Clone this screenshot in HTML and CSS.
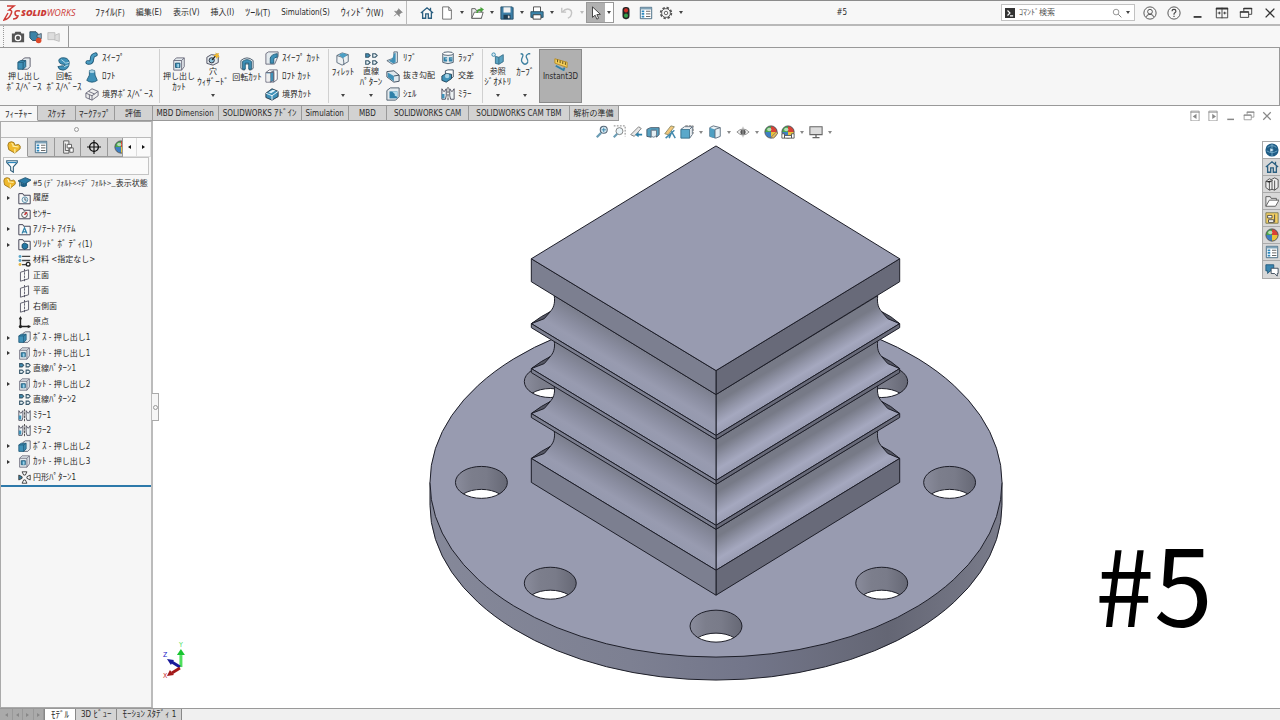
FILE: index.html
```html
<!DOCTYPE html>
<html lang="ja">
<head>
<meta charset="utf-8">
<title>#5 - SOLIDWORKS</title>
<link rel="stylesheet" href="styles.css">
</head>
<body>
<svg class="sprite" aria-hidden="true">
<defs>
<symbol id="home" viewBox="0 0 16 16"><path d="M1 8 8 2l7 6M3 7v7h3.500V9h3v5H13V7M12 5V2" fill="none" stroke="#2b5f80" stroke-width="1.500"/></symbol>
<symbol id="doc" viewBox="0 0 16 16"><path d="M3 1h7l3 3.500V15H3zM10 1v4h3" fill="#fff" stroke="#666"/></symbol>
<symbol id="open" viewBox="0 0 16 16"><path d="M2 14V3h4l1 2h6v9z" fill="#eee" stroke="#555"/><path d="m2 14 3-7h10l-2 7z" fill="#fff" stroke="#555"/><path d="M7 8q1-5 5-5V1l4 3-4 3V5Q9 5 9 8z" fill="#49a33c"/></symbol>
<symbol id="save" viewBox="0 0 16 16"><path d="M1 1h13l1 1v13H1z" fill="#3c7ea6" stroke="#234b66"/><path d="M4 1.500h8v6H4z" fill="#f2f2f2"/><path d="M4 10h8v5H4z" fill="#1e3d52"/><path d="M9 11h2v3H9z" fill="#ddd"/></symbol>
<symbol id="print" viewBox="0 0 16 16"><path d="M4 7V1h8v6" fill="#fff" stroke="#444"/><path d="M1 6.500h14V13H1z" fill="#3b86ad" stroke="#25495e"/><path d="M3.500 10h9v5h-9z" fill="#fff" stroke="#333"/></symbol>
<symbol id="undo" viewBox="0 0 16 16"><path d="M2 2v5h5M2.500 7Q7 2 11 4t1 8l-3 2" fill="none" stroke="#c4c4c4" stroke-width="1.600"/></symbol>
<symbol id="cursor" viewBox="0 0 16 16"><path d="M4 1v12l3-2.500L9 15l2-1-2-4.200 4-.3z" fill="#fff" stroke="#333"/></symbol>
<symbol id="light" viewBox="0 0 16 16"><rect x="4" y="1" width="8" height="14" rx="3.500" fill="#252525"/><circle cx="8" cy="5" r="2.300" fill="#d22f27"/><circle cx="8" cy="11" r="2.300" fill="#37a14b"/></symbol>
<symbol id="list" viewBox="0 0 16 16"><path d="M1.500 1.500h13v13h-13z" fill="#fff" stroke="#39607a"/><path d="M2 2h12v2H2z" fill="#7fa3b8"/><path d="M3 6h3M3 9h3M3 12h3" stroke="#2e88bd" stroke-width="2"/><path d="M8 6h5M8 9h5M8 12h5" stroke="#555"/></symbol>
<symbol id="gear" viewBox="0 0 16 16"><circle cx="8" cy="8" r="6" fill="none" stroke="#555" stroke-width="2.200" stroke-dasharray="2.700 2"/><circle cx="8" cy="8" r="5" fill="#f7f7f7" stroke="#555"/><circle cx="8" cy="8" r="2" fill="none" stroke="#555"/></symbol>
<symbol id="glass" viewBox="0 0 16 16"><circle cx="6.500" cy="6.500" r="4.500" fill="none" stroke="#777" stroke-width="1.200"/><path d="m10 10 5 5" stroke="#777" stroke-width="1.500"/></symbol>
<symbol id="term" viewBox="0 0 16 16"><path d="M0 0h16v16H0z" fill="#333"/><path d="m4 4 4 4-4 4M8 12.500h5" fill="none" stroke="#fff" stroke-width="1.800"/></symbol>
<symbol id="user" viewBox="0 0 16 16"><circle cx="8" cy="8" r="7" fill="none" stroke="#444"/><circle cx="8" cy="6.500" r="2.700" fill="none" stroke="#444"/><path d="M4 12.500q0-3 4-3t4 3" fill="none" stroke="#444"/></symbol>
<symbol id="help" viewBox="0 0 16 16"><circle cx="8" cy="8" r="7" fill="none" stroke="#444"/><path d="M5.800 6q0-2.200 2.200-2.200T10.200 6q0 1-1.200 1.800T8 10M8 11.200v1.500" fill="none" stroke="#444" stroke-width="1.300"/></symbol>
<symbol id="min" viewBox="0 0 16 16"><path d="M3 12.500h9" stroke="currentColor" stroke-width="2"/></symbol>
<symbol id="tile" viewBox="0 0 16 16"><path d="M1.500 2.500h13v11h-13zM8 2v12M3 8h3.500M13 8H9.500M5 6.500v3M11 6.500v3" fill="none" stroke="currentColor"/><path d="M1 3h14" stroke="currentColor" stroke-width="2"/></symbol>
<symbol id="restore" viewBox="0 0 16 16"><path d="M5.500 6V2.500h9v7H11M1.500 6.500H11V13H1.500z" fill="none" stroke="currentColor"/><path d="M5 3h10M1 7h10" stroke="currentColor" stroke-width="1.500"/></symbol>
<symbol id="close" viewBox="0 0 16 16"><path d="m3 3 10 10M13 3 3 13" stroke="currentColor" stroke-width="1.600"/></symbol>
<symbol id="winl" viewBox="0 0 16 16"><path d="M2.500 1.500h11v13h-11zM2 3h12" fill="none" stroke="currentColor"/><path d="M10 5v7L5 8.500z" fill="currentColor"/></symbol>
<symbol id="winr" viewBox="0 0 16 16"><path d="M2.500 1.500h11v13h-11zM2 3h12" fill="none" stroke="currentColor"/><path d="M7 5v7l5-3.500z" fill="currentColor"/></symbol>
<symbol id="pin" viewBox="0 0 16 16"><path d="m9 1 6 6-2 .5-3 3 .5 3L6 9l-4 4 4-4-3.500-4 3 .5 3-3z" fill="#888" stroke="#888"/></symbol>
<symbol id="cam" viewBox="0 0 16 16"><path d="M1 4h3l1-2h6l1 2h3v10H1z" fill="#555"/><circle cx="8" cy="9" r="3.800" fill="#fff"/><circle cx="8" cy="9" r="2.400" fill="#555"/></symbol>
<symbol id="rec" viewBox="0 0 16 16"><path d="M1 2h7l2 2v8H4L1 9z" fill="#3b84a8" stroke="#29485a"/><path d="m9 6 5-2v6L9 8z" fill="#8fb9cf" stroke="#456"/><circle cx="11" cy="12" r="3.200" fill="#dd4a2b"/></symbol>
<symbol id="recg" viewBox="0 0 16 16"><path d="M1 3h8v8H1zM9 6l5-2v9l-6-2" fill="#ddd" stroke="#bbb"/></symbol>
<symbol id="extrude" viewBox="0 0 16 16"><path d="m6 3 3-2h6v10l-3 3H6z" fill="#e4eaee" stroke="#556"/><path d="m1 6 3-2h6v7l-3 3H1z" fill="#3f91b8" stroke="#1f5876"/><path d="M1 6h6v8M7 6l3-2" fill="none" stroke="#1f5876"/></symbol>
<symbol id="revolve" viewBox="0 0 16 16"><path d="M5 1q8-1 9 5 0 8-7 9-5 0-6-4l5-1q3 1 3-1-2-1-4-1-3-1-3-4 0-2 3-3z" fill="#3f91b8" stroke="#1f5876"/><path d="m5 3 5 4 4-1M8 11l5-2" fill="none" stroke="#bfe0ee"/></symbol>
<symbol id="sweep" viewBox="0 0 16 16"><path d="M3 13q5 1 5-4 0-4 4-5" fill="none" stroke="#1f5876" stroke-width="5" stroke-linecap="round"/><path d="M3 13q5 1 5-4 0-4 4-5" fill="none" stroke="#4a9cc2" stroke-width="3" stroke-linecap="round"/></symbol>
<symbol id="loft" viewBox="0 0 16 16"><path d="M5 2q3-2 6 0l.5 5 2.500 6q-6 4-12 0l3-6z" fill="#3f91b8" stroke="#1f5876"/><ellipse cx="8" cy="3" rx="3" ry="1.500" fill="#a8d3e5"/></symbol>
<symbol id="boundary" viewBox="0 0 16 16"><path d="m1 7 7-5 7 3v5l-7 5-7-3z" fill="#eee" stroke="#667"/><path d="m1 7 7 3 7-5M8 10v5M4 5l7 3M5 9v5" fill="none" stroke="#667"/></symbol>
<symbol id="cut" viewBox="0 0 16 16"><path d="m2 4 3-3h9v10l-3 4H2z" fill="#e4eaee" stroke="#667"/><path d="M2 4h9v11M11 4l3-3" fill="none" stroke="#667"/><path d="M4 7h5v5H4z" fill="#3f91b8" stroke="#1f5876"/><path d="M6 8h2v4H6z" fill="#9ed0e6"/></symbol>
<symbol id="hole" viewBox="0 0 16 16"><path d="m1 6 5-3 8 1v8l-6 3-7-2z" fill="#e4eaee" stroke="#445"/><circle cx="6.500" cy="9.500" r="3" fill="#8cc1d8" stroke="#223"/><path d="m7 9 6-7" stroke="#222" stroke-width="1.500"/><path d="m11 0 1 2 3-1-1 3 2 2h-3l-1 2-1-3-3-1 3-1z" fill="#f1b92e"/></symbol>
<symbol id="revcut" viewBox="0 0 16 16"><path d="M1 4q7-6 14 0v9q-2 2-4 2V8H5v7q-2 0-4-2z" fill="#e7edf0" stroke="#456"/><path d="M3 5q5-4 10 0v9h-3V7H6v7H3z" fill="#3f91b8" stroke="#1f5876"/></symbol>
<symbol id="sweepcut" viewBox="0 0 16 16"><path d="m1 3 3-2h11v5l-4 9H1z" fill="#e4eaee" stroke="#667"/><path d="M6 14V8q1-4 8-5v4q-3 0-4 2v5z" fill="#3f91b8" stroke="#1f5876"/></symbol>
<symbol id="loftcut" viewBox="0 0 16 16"><path d="m1 4 4-3h9v11l-4 3H1z" fill="#fff" stroke="#667"/><path d="m6 4 4-2v11l-4 2zM1 4h9v11" fill="#3f91b8" stroke="#667"/><path d="M2 5h4v9H2z" fill="#eee"/></symbol>
<symbol id="boundcut" viewBox="0 0 16 16"><path d="m1 7 7-5 7 3v6l-7 4-7-3z" fill="#3f91b8" stroke="#234"/><path d="m1 7 7 3 7-5M8 10v5" fill="none" stroke="#fff"/><path d="m4 6 5-3 3 1-5 3z" fill="#dff1fa"/></symbol>
<symbol id="fillet" viewBox="0 0 16 16"><path d="m1 4 6-3 7 2v8l-7 4-6-3z" fill="#edf1f3" stroke="#567"/><path d="m1 4 6 2q2 1 2 9M7 6l7-3" fill="none" stroke="#567"/><path d="m3 3 5-2 5 2-5 4z" fill="#4ca0c6"/></symbol>
<symbol id="pattern" viewBox="0 0 16 16"><g fill="#e9f3f7" stroke="#39586b" stroke-width="1.300"><path d="M2 2h3l2 2-2 2H2z" fill="#3f91b8"/><path d="M10 2h3l2 2-2 2h-3zM2 10h3l2 2-2 2H2zM10 10h3l2 2-2 2h-3z"/></g></symbol>
<symbol id="rib" viewBox="0 0 16 16"><path d="M1 11 9 8V1h4v12l-6 2z" fill="#e4eaee" stroke="#567"/><path d="M3 11q5-1 6-8l2-1v11l-3 1z" fill="#3f91b8"/></symbol>
<symbol id="draft" viewBox="0 0 16 16"><path d="m1 3 8-1 6 5v7l-6 1-8-6z" fill="#dfe8ed" stroke="#345"/><path d="m2 4 7 4v6L2 9z" fill="#3f91b8"/><path d="m9 8 6-1" stroke="#345"/></symbol>
<symbol id="shell" viewBox="0 0 16 16"><path d="m1 4 4-3h10v10l-4 4H1z" fill="#e4eaee" stroke="#456"/><path d="M4 5h9v8H4z" fill="#2e80a8"/><path d="M7 5h6v6l-3-1V8z" fill="#b6dbe9"/></symbol>
<symbol id="wrap" viewBox="0 0 16 16"><path d="M2 3v10q6 3 12 0V3" fill="#e2eaee" stroke="#456"/><ellipse cx="8" cy="3" rx="6" ry="2" fill="#fff" stroke="#456"/><path d="M3 7h4v5H3zM9 7h4v5H9z" fill="#2e80a8"/><path d="M5 9h2M11 9h1" stroke="#fff"/></symbol>
<symbol id="intersect" viewBox="0 0 16 16"><path d="m5 2 3-1h6v8l-3 2H5z" fill="#fff" stroke="#345"/><path d="m1 8 5-3 6 1v5l-6 4-5-2z" fill="#3f91b8" stroke="#1f4055"/><circle cx="7" cy="8" r="2.500" fill="#a8d3e5"/></symbol>
<symbol id="mirror" viewBox="0 0 16 16"><path d="M1 2v12h4l1-4V2L4 5H3zM15 2v12h-4l-1-4V2l2 3h1z" fill="#eef3f5" stroke="#445"/><path d="M1 8h3v5H1z" fill="#3f91b8"/><path d="M8 0v16" stroke="#333" stroke-dasharray="3 1"/></symbol>
<symbol id="refgeo" viewBox="0 0 16 16"><circle cx="3" cy="3" r="2" fill="#d8ebf3" stroke="#2e80a8"/><path d="m5 5 4 1 5-3v8l-5 3-4-1z" fill="#5aa3c2" stroke="#326a86"/><path d="M9 6v8" stroke="#326a86"/></symbol>
<symbol id="curve" viewBox="0 0 16 16"><path d="M3 2q4 0 2 4t0 6q3 4 6 0 1-2-1-5t2-5h2" fill="none" stroke="#3c7f9f" stroke-width="1.500"/></symbol>
<symbol id="ruler" viewBox="0 0 16 16"><path d="m1 2 14 4v6L1 7z" fill="#f4cf5b" stroke="#b58a22"/><path d="M4 3v3M7 4v3M10 5v3M13 6v3" stroke="#554414"/><path d="m2 10 9 5 1-3" fill="none" stroke="#2e80a8" stroke-width="2"/></symbol>
<symbol id="part" viewBox="0 0 16 16"><path d="M1 6q0-4 4-4t4 4l4-1q3 1 2 5l-6 5-7-4z" fill="#f0b92c" stroke="#9a7319"/><path d="M5 4q2 0 2 3l6 1M9 10v5" fill="none" stroke="#fff0a8" stroke-width="1.400"/></symbol>
<symbol id="config" viewBox="0 0 16 16"><path d="M3 1h6v14H3z" fill="#eee" stroke="#555"/><path d="M7 5h5v4H7zM10 9h4v5h-4z" fill="#fff" stroke="#555"/><path d="M5 4v8M5 12h4" stroke="#555"/></symbol>
<symbol id="target" viewBox="0 0 16 16"><circle cx="8" cy="8" r="5" fill="none" stroke="#111" stroke-width="1.600"/><path d="M8 0v16M0 8h16" stroke="#111" stroke-width="1.300"/></symbol>
<symbol id="ball" viewBox="0 0 16 16"><circle cx="8" cy="8" r="7" fill="#3d7fc4"/><path d="M8 8V1a7 7 0 0 0-7 7z" fill="#49a84c"/><path d="M8 8V1a7 7 0 0 1 7 7z" fill="#d94235"/><path d="M8 8v7a7 7 0 0 0 7-7z" fill="#e8c33a"/><circle cx="8" cy="8" r="7" fill="none" stroke="#555"/><ellipse cx="6" cy="5" rx="2.500" ry="2" fill="#fff" opacity=".6"/></symbol>
<symbol id="filter" viewBox="0 0 16 16"><path d="M2 2h12v2l-4.500 5v6l-3-2V9L2 4z" fill="#fff" stroke="#2f5f7c" stroke-width="1.300"/><path d="M3 4h10" stroke="#2e88bd" stroke-width="1.500"/></symbol>
<symbol id="cap" viewBox="0 0 16 16"><path d="m0 6 9-4 7 3-8 5z" fill="#2b7ba6" stroke="#174a68"/><path d="M3 8v4q4 3 8 0V8L8 10z" fill="#1f5f83"/><path d="M2 7v6" stroke="#174a68"/></symbol>
<symbol id="folder" viewBox="0 0 16 16"><path d="M1 14.500V2h5l1 2h8v10.500z" fill="#f8f8f8" stroke="#445" stroke-width="1.200"/></symbol>
<symbol id="hist" viewBox="0 0 16 16"><use href="#folder"/><circle cx="8.500" cy="9.500" r="3.500" fill="#e5f2f8" stroke="#47809d"/><path d="M8.500 7v3h2" fill="none" stroke="#345"/></symbol>
<symbol id="sensor" viewBox="0 0 16 16"><use href="#folder"/><circle cx="8" cy="9.500" r="3.500" fill="none" stroke="#333"/><path d="m8 9.500 3-3" stroke="#c33" stroke-width="2"/></symbol>
<symbol id="annot" viewBox="0 0 16 16"><use href="#folder"/><path d="m5 13 3-7 3 7M6 11h4" fill="none" stroke="#2e80a8" stroke-width="1.500"/></symbol>
<symbol id="solid" viewBox="0 0 16 16"><use href="#folder"/><path d="m5 8 3-2 4 2v4l-4 2-3-2z" fill="#2477a3" stroke="#123d57"/></symbol>
<symbol id="mat" viewBox="0 0 16 16"><path d="M5 3h10M5 8h10M5 13h6" stroke="#444" stroke-width="1.600"/><circle cx="2.500" cy="3" r="1.800" fill="#5aa6c8"/><circle cx="2.500" cy="8" r="1.800" fill="#5aa6c8"/><circle cx="2.500" cy="13" r="1.800" fill="#e5b645"/><circle cx="12.500" cy="12.500" r="2.300" fill="#fff" stroke="#222" stroke-width="1.600"/></symbol>
<symbol id="plane" viewBox="0 0 16 16"><path d="m3 4 10-3v11L3 15z" fill="#f8f8f8" stroke="#445"/><path d="M8 0v16" stroke="#445" stroke-dasharray="3 1"/></symbol>
<symbol id="origin" viewBox="0 0 16 16"><path d="M3 2v11h12" fill="none" stroke="#222" stroke-width="1.800"/><path d="M3 0 1 4h4zM16 13l-4-2v4z" fill="#222"/><circle cx="3" cy="13" r="2" fill="#222"/></symbol>
<symbol id="circpat" viewBox="0 0 16 16"><g fill="#fff" stroke="#444" stroke-width="1.200"><path d="M5 1h6L9 5H7zM5 15h6l-2-4H7zM15 5v6l-4-2V7z"/><path d="M1 5v6l4-2V7z" fill="#2e80a8"/></g></symbol>
<symbol id="zoomfit" viewBox="0 0 16 16"><circle cx="10" cy="5.500" r="4" fill="#d9ebf4" stroke="#567" stroke-width="1.200"/><path d="m7 9-5 5" stroke="#6a9cb4" stroke-width="2.500"/><path d="M10 3v5M7.500 5.500h5" stroke="#2e80a8"/></symbol>
<symbol id="zoomarea" viewBox="0 0 16 16"><path d="M2 1h13v12" fill="none" stroke="#777" stroke-dasharray="2 1.500"/><circle cx="8.500" cy="7" r="4" fill="#eaf4f8" stroke="#777"/><path d="m6 10-4 4" stroke="#6a9cb4" stroke-width="2.500"/></symbol>
<symbol id="prev" viewBox="0 0 16 16"><path d="m2 11 9-9 3 2-8 9z" fill="#e7e7e7" stroke="#777"/><path d="m7 11 4-3v2h4v2h-4v2z" fill="#2e80a8"/></symbol>
<symbol id="section" viewBox="0 0 16 16"><path d="m1 5 4-2h10v8l-3 3V6H6v8l-5-1z" fill="#549fc0" stroke="#456"/><path d="M6 6h6v6l-3 2-3-1z" fill="#e3eef3" stroke="#678"/></symbol>
<symbol id="dyn" viewBox="0 0 16 16"><path d="m2 10 7-9 4 1-7 9z" fill="#f2c77b" stroke="#886"/><path d="M3 15 13 6M7 15l3-7 4 7" fill="none" stroke="#4289ad" stroke-width="1.700"/></symbol>
<symbol id="orient" viewBox="0 0 16 16"><path d="M6 1h9v9" fill="none" stroke="#666" stroke-dasharray="3 1"/><path d="M1 5h10v10H1z" fill="#5aa8ca" stroke="#326a86"/><path d="m1 5 4-3h9v9l-3 4M11 5l3-3" fill="none" stroke="#567"/></symbol>
<symbol id="style" viewBox="0 0 16 16"><path d="m2 3 4-2 8 2v10l-5 2-7-2z" fill="#e8f1f5" stroke="#567"/><path d="m2 3 6 2v10l-6-2z" fill="#4e9fc2"/><path d="m8 5 6-2M8 5v10" stroke="#567"/></symbol>
<symbol id="eye" viewBox="0 0 16 16"><path d="M1 8q7-7 14 0-7 7-14 0z" fill="#eee" stroke="#888"/><circle cx="8" cy="8" r="3" fill="#555"/><path d="M8 2v12" stroke="#aaa"/></symbol>
<symbol id="appear" viewBox="0 0 16 16"><use href="#ball"/><path d="m8 14 6-6 2 1-5 6z" fill="#e9c35c" stroke="#876"/></symbol>
<symbol id="scene" viewBox="0 0 16 16"><use href="#ball"/><path d="M1 10h3v5H1zM12 10h3v5h-3zM4 12h8v3H4z" fill="#fff" stroke="#555"/></symbol>
<symbol id="monitor" viewBox="0 0 16 16"><path d="M1 2h14v9H1z" fill="#ddd" stroke="#666" stroke-width="1.200"/><path d="M8 11v3M4 14.500h8" stroke="#666" stroke-width="1.500"/></symbol>
<symbol id="globe" viewBox="0 0 16 16"><circle cx="8" cy="8" r="7.500" fill="#1f5d86"/><path d="M3 5q5-4 10 0M2 9q6 4 12 0M8 1v14" fill="none" stroke="#76abc9"/><path d="m6 6 4 2-4 2z" fill="#cfe6f2"/></symbol>
<symbol id="books" viewBox="0 0 16 16"><path d="m1 5 4-3 2 1 4-2 4 2v9l-4 3-3-1-3 1-4-3z" fill="#eee" stroke="#444"/><path d="M5 5v10M8 5v9M11 4v11M1 5l4 1 4-2" stroke="#444"/></symbol>
<symbol id="fopen" viewBox="0 0 16 16"><path d="M1 14V3h5l1 2h6v3" fill="#eee" stroke="#555"/><path d="m1 14 4-7h11l-4 7z" fill="#fff" stroke="#555"/></symbol>
<symbol id="palette" viewBox="0 0 16 16"><path d="M1 2h14v12H1z" fill="#f3cf62" stroke="#775"/><path d="M3 5h5v3H3zM4 10h6v3H4zM11 4v9" fill="#fff" stroke="#444"/></symbol>
<symbol id="chat" viewBox="0 0 16 16"><path d="M1 2h9v7H6l-3 3V9H1z" fill="#3b86b0" stroke="#24597a"/><path d="M7 6h8v6h-1v3l-3-3H7z" fill="#fff" stroke="#345"/></symbol>
</defs>
</svg>

<div class="app">
<header class="titlebar">
  <svg class="logo" viewBox="0 0 18 18" role="img" aria-label="3DS"><path d="M4 2h7L6 6q4 0 2 4-2 5-7 6l4-7M17 7q-5-1-5 2t3 3q-1 3-5 3" fill="none" stroke="#cf3a35" stroke-width="1.500"/></svg>
  <span class="brand"><strong>SOLID</strong>WORKS</span>
  <nav class="menu">
    <button><span class="k">ﾌｧｲﾙ</span>(F)</button><button>編集(E)</button><button>表示(V)</button><button>挿入(I)</button><button><span class="k">ﾂｰﾙ</span>(T)</button><button>Simulation(S)</button><button><span class="k">ｳｨﾝﾄﾞｳ</span>(W)</button>
  </nav>
  <button class="pin" aria-label="Pin"><svg><use href="#pin"/></svg></button>
  <div class="qat">
    <button aria-label="Home"><svg><use href="#home"/></svg></button>
    <button aria-label="New"><svg><use href="#doc"/></svg></button><i class="dd"></i>
    <button aria-label="Open"><svg><use href="#open"/></svg></button><i class="dd"></i>
    <button aria-label="Save"><svg><use href="#save"/></svg></button><i class="dd"></i>
    <button aria-label="Print"><svg><use href="#print"/></svg></button><i class="dd"></i>
    <button aria-label="Undo"><svg><use href="#undo"/></svg></button><i class="dd dim"></i>
    <span class="select"><button class="pressed" aria-label="Select"><svg><use href="#cursor"/></svg></button><i class="dd"></i></span>
    <button aria-label="Rebuild"><svg><use href="#light"/></svg></button>
    <button aria-label="Properties"><svg><use href="#list"/></svg></button>
    <button aria-label="Options"><svg><use href="#gear"/></svg></button><i class="dd"></i>
  </div>
  <h1 class="title">#5</h1>
  <label class="search"><svg><use href="#term"/></svg><input type="text" placeholder="ｺﾏﾝﾄﾞ検索" aria-label="ｺﾏﾝﾄﾞ検索"><svg><use href="#glass"/></svg><i class="dd"></i></label>
  <div class="winbtns">
    <button aria-label="Account"><svg><use href="#user"/></svg></button><button aria-label="Help"><svg><use href="#help"/></svg></button><button aria-label="Minimize"><svg><use href="#min"/></svg></button><button aria-label="Tile"><svg><use href="#tile"/></svg></button><button aria-label="Restore"><svg><use href="#restore"/></svg></button><button aria-label="Close"><svg><use href="#close"/></svg></button>
  </div>
</header>

<div class="capture">
  <div class="capture-tools">
    <button aria-label="Capture"><svg><use href="#cam"/></svg></button><button aria-label="Record"><svg><use href="#rec"/></svg></button><button aria-label="Stop" disabled><svg><use href="#recg"/></svg></button>
  </div>
</div>

<section class="ribbon">
  <div class="group g1">
    <button class="big low w40"><svg><use href="#extrude"/></svg><span>押し出し<br><span class="k">ﾎﾞｽ/ﾍﾞｰｽ</span></span></button>
    <button class="big low w40"><svg><use href="#revolve"/></svg><span>回転<br><span class="k">ﾎﾞｽ/ﾍﾞｰｽ</span></span></button>
    <div class="stack">
      <button class="k"><svg><use href="#sweep"/></svg>ｽｲｰﾌﾟ</button>
      <button class="k"><svg><use href="#loft"/></svg>ﾛﾌﾄ</button>
      <button><svg><use href="#boundary"/></svg><span>境界<span class="k">ﾎﾞｽ/ﾍﾞｰｽ</span></span></button>
    </div>
  </div>
  <div class="group g2">
    <button class="big low w34"><svg><use href="#cut"/></svg><span>押し出し<br><span class="k">ｶｯﾄ</span></span></button>
    <button class="big w34"><svg><use href="#hole"/></svg><span>穴<br><span class="k">ｳｨｻﾞｰﾄﾞ</span></span><i class="dd"></i></button>
    <button class="big low w34"><svg><use href="#revcut"/></svg><span>回転<span class="k">ｶｯﾄ</span></span></button>
    <div class="stack">
      <button class="k"><svg><use href="#sweepcut"/></svg>ｽｲｰﾌﾟ ｶｯﾄ</button>
      <button class="k"><svg><use href="#loftcut"/></svg>ﾛﾌﾄ ｶｯﾄ</button>
      <button><svg><use href="#boundcut"/></svg><span>境界<span class="k">ｶｯﾄ</span></span></button>
    </div>
  </div>
  <div class="group g3">
    <button class="big w28"><svg><use href="#fillet"/></svg><span class="k">ﾌｨﾚｯﾄ</span><i class="dd"></i></button>
    <button class="big w28"><svg><use href="#pattern"/></svg><span>直線<br><span class="k">ﾊﾟﾀｰﾝ</span></span><i class="dd"></i></button>
    <div class="stack s55">
      <button class="k"><svg><use href="#rib"/></svg>ﾘﾌﾞ</button>
      <button><svg><use href="#draft"/></svg>抜き勾配</button>
      <button class="k"><svg><use href="#shell"/></svg>ｼｪﾙ</button>
    </div>
    <div class="stack">
      <button class="k"><svg><use href="#wrap"/></svg>ﾗｯﾌﾟ</button>
      <button><svg><use href="#intersect"/></svg>交差</button>
      <button class="k"><svg><use href="#mirror"/></svg>ﾐﾗｰ</button>
    </div>
  </div>
  <div class="group g4">
    <button class="big w28"><svg><use href="#refgeo"/></svg><span>参照<br><span class="k">ｼﾞｵﾒﾄﾘ</span></span><i class="dd"></i></button>
    <button class="big w28"><svg><use href="#curve"/></svg><span class="k">ｶｰﾌﾞ</span><i class="dd"></i></button>
  </div>
  <button class="big low instant"><svg><use href="#ruler"/></svg><span>Instant3D</span></button>
</section>

<div class="tabrow">
  <div class="cmdtabs">
    <button class="k on t38">ﾌｨｰﾁｬｰ</button><button class="k t38">ｽｹｯﾁ</button><button class="k t38">ﾏｰｸｱｯﾌﾟ</button><button class="t38">評価</button><button>MBD Dimension</button><button>SOLIDWORKS <span class="k">ｱﾄﾞｲﾝ</span></button><button>Simulation</button><button class="t38">MBD</button><button class="wide">SOLIDWORKS CAM</button><button class="wide">SOLIDWORKS CAM TBM</button><button>解析の準備</button>
  </div>
  <div class="docbtns">
    <button aria-label="Previous pane"><svg><use href="#winl"/></svg></button><button aria-label="Next pane"><svg><use href="#winr"/></svg></button><button aria-label="Minimize document"><svg><use href="#min"/></svg></button><button aria-label="Restore document"><svg><use href="#restore"/></svg></button><button aria-label="Close document"><svg><use href="#close"/></svg></button>
  </div>
</div>

<main class="work">
  <aside class="panel">
    <div class="grip"><i></i></div>
    <div class="ptabs">
      <button class="on" aria-label="FeatureManager"><svg><use href="#part"/></svg></button><button aria-label="PropertyManager"><svg><use href="#list"/></svg></button><button aria-label="ConfigurationManager"><svg><use href="#config"/></svg></button><button aria-label="DimXpert"><svg><use href="#target"/></svg></button><button class="part-tab" aria-label="DisplayManager"><svg><use href="#ball"/></svg></button><button class="arr" aria-label="Left"><i class="al"></i></button><button class="arr" aria-label="Right"><i class="ar"></i></button>
    </div>
    <label class="filter"><svg><use href="#filter"/></svg><input type="text" aria-label="Filter"></label>
    <ul class="tree">
      <li class="root"><svg><use href="#part"/></svg><svg><use href="#cap"/></svg><span>#5 (ﾃﾞ ﾌｫﾙﾄ&lt;&lt;ﾃﾞ ﾌｫﾙﾄ&gt;_表示状態</span></li>
      <li class="x"><svg><use href="#hist"/></svg><span>履歴</span></li>
      <li><svg><use href="#sensor"/></svg><span class="k">ｾﾝｻｰ</span></li>
      <li class="x"><svg><use href="#annot"/></svg><span class="k">ｱﾉﾃｰﾄ ｱｲﾃﾑ</span></li>
      <li class="x"><svg><use href="#solid"/></svg><span><span class="k">ｿﾘｯﾄﾞ ﾎﾞ ﾃﾞｨ</span>(1)</span></li>
      <li><svg><use href="#mat"/></svg><span>材料 &lt;指定なし&gt;</span></li>
      <li><svg><use href="#plane"/></svg><span>正面</span></li>
      <li><svg><use href="#plane"/></svg><span>平面</span></li>
      <li><svg><use href="#plane"/></svg><span>右側面</span></li>
      <li><svg><use href="#origin"/></svg><span>原点</span></li>
      <li class="x"><svg><use href="#extrude"/></svg><span><span class="k">ﾎﾞｽ</span> - 押し出し1</span></li>
      <li class="x"><svg><use href="#cut"/></svg><span><span class="k">ｶｯﾄ</span> - 押し出し1</span></li>
      <li><svg><use href="#pattern"/></svg><span>直線<span class="k">ﾊﾟﾀｰﾝ</span>1</span></li>
      <li class="x"><svg><use href="#cut"/></svg><span><span class="k">ｶｯﾄ</span> - 押し出し2</span></li>
      <li><svg><use href="#pattern"/></svg><span>直線<span class="k">ﾊﾟﾀｰﾝ</span>2</span></li>
      <li><svg><use href="#mirror"/></svg><span><span class="k">ﾐﾗｰ</span>1</span></li>
      <li><svg><use href="#mirror"/></svg><span><span class="k">ﾐﾗｰ</span>2</span></li>
      <li class="x"><svg><use href="#extrude"/></svg><span><span class="k">ﾎﾞｽ</span> - 押し出し2</span></li>
      <li class="x"><svg><use href="#cut"/></svg><span><span class="k">ｶｯﾄ</span> - 押し出し3</span></li>
      <li><svg><use href="#circpat"/></svg><span>円形<span class="k">ﾊﾟﾀｰﾝ</span>1</span></li>
    </ul>
  </aside>
  <section class="view">
    <svg class="scene" viewBox="153 121 1127 588" preserveAspectRatio="xMidYMid meet" role="img" aria-label="3D model">
      <defs>
        <linearGradient id="rim" gradientUnits="userSpaceOnUse" x1="429" y1="0" x2="1003" y2="0"><stop offset="0" stop-color="#858899"/><stop offset=".35" stop-color="#7d8092"/><stop offset=".55" stop-color="#73768a"/><stop offset=".8" stop-color="#646674"/><stop offset="1" stop-color="#7a7c8b"/></linearGradient>
        <linearGradient id="wall"><stop offset="0" stop-color="#8a8c9c"/><stop offset=".3" stop-color="#7c7e8c"/><stop offset=".6" stop-color="#797b89"/><stop offset="1" stop-color="#666875"/></linearGradient>
        <linearGradient id="gr" gradientUnits="userSpaceOnUse" x1="716" y1="395" x2="734" y2="425"><stop offset="0" stop-color="#777a87"/><stop offset=".2" stop-color="#777a87"/><stop offset=".5" stop-color="#9194a7"/><stop offset=".75" stop-color="#a5a8bf"/><stop offset="1" stop-color="#999cb2"/></linearGradient>
        <linearGradient id="gl" gradientUnits="userSpaceOnUse" x1="716" y1="395" x2="698" y2="425"><stop offset="0" stop-color="#7c7f8e"/><stop offset=".35" stop-color="#8a8da0"/><stop offset=".7" stop-color="#989bb0"/><stop offset="1" stop-color="#9599ae"/></linearGradient>
        <clipPath id="hc"><ellipse rx="26" ry="16"/></clipPath>
        <g id="bore"><ellipse rx="26" ry="16" fill="url(#wall)"/><g clip-path="url(#hc)"><ellipse cy="23" rx="26" ry="16" fill="#fff" stroke="#1d1e28"/></g><ellipse rx="26" ry="16" fill="none" stroke="#1d1e28"/></g>
        <g id="groove">
          <path d="M716 395 878 296C876 312 885 315 900 324L716 436z" fill="url(#gr)"/>
          <path d="M716 395 554 296C556 312 547 315 531 324L716 436z" fill="url(#gl)"/>
          <path d="M882 312 891 317 900 324 888 319zM550 312 541 317 531 324 544 319z" fill="#555764"/>
        </g>
        <g id="fin"><path d="M716 436 900 324v4L716 440z" fill="#686a79"/><path d="M716 436 531 324v4l185 112z" fill="#7c7f90"/></g>
      </defs>
      <g stroke="#1d1e28" stroke-width="1" stroke-linejoin="round">
        <path d="M429.500 483v23a286.500 175 0 0 0 573 0V483z" fill="url(#rim)"/>
        <ellipse cx="716" cy="483" rx="286.500" ry="175" fill="#989bb0"/>
      </g>
      <use href="#bore" x="550" y="382"/><use href="#bore" x="882" y="382"/><use href="#bore" x="481" y="483"/><use href="#bore" x="950" y="483"/><use href="#bore" x="550" y="584"/><use href="#bore" x="882" y="584"/><use href="#bore" x="716" y="627"/>
      <g stroke="#1d1e28" stroke-width="1" stroke-linejoin="round">
        <use href="#groove"/><use href="#groove" y="45"/><use href="#groove" y="90"/><use href="#groove" y="135"/>
        <use href="#fin"/><use href="#fin" y="45"/><use href="#fin" y="90"/>
        <path d="M716 571 900 459v24L716 596z" fill="#686a79"/>
        <path d="M716 571 531 459v24l185 113z" fill="#7c7f90"/>
        <path d="M716 371 900 259v23L716 395z" fill="#686a79"/>
        <path d="M716 371 531 259v23l185 113z" fill="#7c7f90"/>
        <path d="m716 146 184 113-184 112L531 259z" fill="#989bb0"/>
      </g>
      <g fill="none" stroke-width="3">
        <path d="M180 668v-12" stroke="#4fe05c"/><path d="m176 656 4-6 4 6z" fill="#19c531" stroke="none"/>
        <path d="m179 668-8-5" stroke="#1a1a9a"/><path d="m166 660 7 1-3 5z" fill="#1a1a9a" stroke="none"/>
        <path d="m179 669-8 5" stroke="#a31818"/><path d="m166 677 3-6 4 5z" fill="#a31818" stroke="none"/>
      </g>
      <g class="axis"><text x="178" y="648" fill="#44e05a">Y</text><text x="162" y="658" fill="#2222c8">Z</text><text x="162" y="679" fill="#c82a2a">X</text></g>
      <text class="bignum" x="1096" y="628">#5</text>
    </svg>
    <div class="hud">
      <button aria-label="Zoom to fit"><svg><use href="#zoomfit"/></svg></button><button aria-label="Zoom to area"><svg><use href="#zoomarea"/></svg></button><button aria-label="Previous view"><svg><use href="#prev"/></svg></button><button aria-label="Section view"><svg><use href="#section"/></svg></button><button aria-label="Dynamic annotation"><svg><use href="#dyn"/></svg></button><button aria-label="View orientation"><svg><use href="#orient"/></svg></button><i class="dd"></i><button aria-label="Display style"><svg><use href="#style"/></svg></button><i class="dd"></i><button aria-label="Hide/show"><svg><use href="#eye"/></svg></button><i class="dd"></i><button aria-label="Appearance"><svg><use href="#appear"/></svg></button><button aria-label="Scene"><svg><use href="#scene"/></svg></button><i class="dd"></i><button aria-label="View settings"><svg><use href="#monitor"/></svg></button><i class="dd"></i>
    </div>
    <button class="handle" aria-label="Collapse panel"><i></i></button>
    <div class="taskpane">
      <button class="on" aria-label="3DEXPERIENCE"><svg><use href="#globe"/></svg></button><button aria-label="Resources"><svg><use href="#home"/></svg></button><button aria-label="Design library"><svg><use href="#books"/></svg></button><button aria-label="File explorer"><svg><use href="#fopen"/></svg></button><button aria-label="View palette"><svg><use href="#palette"/></svg></button><button aria-label="Appearances"><svg><use href="#ball"/></svg></button><button aria-label="Custom properties"><svg><use href="#list"/></svg></button><button aria-label="Forum"><svg><use href="#chat"/></svg></button>
    </div>
  </section>
</main>

<footer class="bottom">
  <div class="nav"><button aria-label="First"><i class="al"></i></button><button aria-label="Previous"><i class="al"></i></button><button aria-label="Next"><i class="ar"></i></button><button aria-label="Last"><i class="ar"></i></button></div>
  <button class="tab k on">ﾓﾃﾞﾙ</button><button class="tab"><span>3D <span class="k">ﾋﾞｭｰ</span></span></button><button class="tab"><span><span class="k">ﾓｰｼｮﾝ ｽﾀﾃﾞｨ</span> 1</span></button>
</footer>
</div>
</body>
</html>
```
FILE: styles.css
```css
* { box-sizing: border-box; }
body {
  margin: 0;
  font: 8px/10px "DejaVu Sans Condensed", "Noto Sans CJK JP", sans-serif;
  color: #2a2a2a;
  background: #fff;
}
button {
  appearance: none;
  border: 0;
  padding: 0;
  margin: 0;
  background: none;
  font: inherit;
  color: inherit;
  white-space: nowrap;
}
input { border: 0; padding: 0; background: none; font: inherit; color: inherit; outline: 0; min-width: 0; }
svg { display: block; flex: none; width: 14px; height: 14px; }
.sprite { position: absolute; width: 0; height: 0; }
.k { font-family: "Noto Sans CJK JP", sans-serif; font-size: 9px; }

.app { min-height: 100vh; display: grid; grid-template-rows: 26px 22px 58px 15px 1fr 12px; }

.dd { display: block; width: 0; height: 0; border: 2px solid transparent; border-top: 3px solid #444; border-bottom: 0; flex: none; }
.dim { border-top-color: #bbb; }
.al, .ar { display: block; width: 0; height: 0; border: 2px solid transparent; }
.al { border-right: 3px solid currentColor; border-left: 0; }
.ar { border-left: 3px solid currentColor; border-right: 0; }

.titlebar { display: flex; align-items: center; background: #f7f7f7; border-top: 1px solid #8c8c8c; border-bottom: 2px solid #b9b9b9; }
.logo { width: 18px; height: 18px; margin-left: 3px; }
.brand { font: italic 9px/10px "Open Sans", sans-serif; color: #cb3a36; width: 74px; }
.brand strong { font-weight: 800; }
.menu { display: flex; gap: 11px; }
.menu .k { font-size: 10px; }
.pin { margin-left: 9px; }
.pin svg { width: 10px; height: 10px; }
.qat { display: flex; align-items: center; gap: 6px; height: 24px; margin-left: 3px; padding-left: 13px; border-left: 1px solid #bbb; }
.select { display: flex; align-items: center; gap: 2px; border: 1px solid #999; height: 21px; margin: 0 -1px 0 -4px; padding-right: 2px; background: #fff; }
.pressed { background: #b0b0b0; height: 19px; padding: 0 2px; }
.title { flex: 1; margin: 0; text-align: center; font-size: 8px; font-weight: 400; }
.search { display: flex; align-items: center; gap: 4px; width: 134px; height: 17px; padding: 0 4px 0 3px; border: 1px solid #c2c2c2; background: #fff; }
.search svg { width: 10px; height: 10px; }
.search input { flex: 1; font-size: 8px; }
.search input::placeholder { color: #555; opacity: 1; }
.winbtns { display: flex; gap: 10px; padding: 0 3px 0 8px; color: #333; }

.capture { background: #f7f7f7; border-bottom: 1px solid #999; display: flex; }
.capture-tools { display: flex; align-items: center; gap: 4px; width: 66px; padding-left: 7px; margin-left: 3px; border-left: 1px dotted #999; border-right: 1px solid #999; }

.ribbon { display: flex; background: #f6f6f6; border-bottom: 1px solid #999; border-right: 1px solid #999; }
.group { display: flex; border-right: 1px solid #d0d0d0; margin: 1px 0 2px; }
.g1 { width: 160px; padding-left: 4px; }
.g2 { width: 169px; padding-left: 2px; }
.g3 { width: 154px; }
.g4 { width: 56px; padding-left: 1px; border-right: 0; }
.big { display: flex; flex-direction: column; align-items: center; position: relative; padding-top: 3px; line-height: 10px; text-align: center; }
.big > svg { margin-bottom: 1px; }
.big .k { line-height: 10px; }
.low { padding-top: 8px; }
.big > .dd { position: absolute; bottom: 6px; }
.w40 { width: 40px; }
.w34 { width: 34px; }
.w28 { width: 28px; }
.stack { display: grid; grid-template-rows: repeat(3, 18px); align-items: center; margin-left: 1px; }
.stack button { display: flex; align-items: center; gap: 3px; }
.s55 { width: 54px; }
.instant { width: 43px; background: #b0b0b0; border: 1px solid #8a8a8a; margin: 1px 0 2px; padding-top: 7px; }

.tabrow { display: flex; justify-content: space-between; background: #fff; }
.cmdtabs { display: flex; background: #d2d2d2; }
.cmdtabs button { padding: 1px 4px 0; border-right: 1px solid #999; border-bottom: 1px solid #999; }
.cmdtabs button.on { background: #f6f6f6; border-bottom-color: #f6f6f6; }
.cmdtabs .t38 { min-width: 38px; padding: 1px 3px 0; }
.cmdtabs .wide { padding: 1px 7px 0; }
.docbtns { display: flex; align-items: end; gap: 6px; padding-right: 7px; color: #888; }
.docbtns svg { width: 12px; height: 12px; }
.docbtns button { height: 11px; }

.work { display: flex; min-height: 587px; }
.panel { width: 153px; flex: none; background: #f6f6f6; border: 1px solid #aaa; border-right: 2px solid #bbb; display: flex; flex-direction: column; }
.grip { height: 16px; display: flex; align-items: center; justify-content: center; border-bottom: 1px solid #bbb; }
.grip i, .handle i { width: 5px; height: 5px; border: 1px solid #999; border-radius: 50%; }
.ptabs { display: flex; height: 19px; }
.ptabs button { width: 27px; display: flex; align-items: center; justify-content: center; background: #d5d5d5; border-right: 1px solid #999; border-bottom: 1px solid #999; overflow: hidden; }
.ptabs button.on { background: #f6f6f6; border-bottom-color: #f6f6f6; }
.ptabs .part-tab { width: 15px; justify-content: flex-start; padding-left: 6px; }
.ptabs .arr { width: 14px; background: #fafafa; border-color: #ddd; color: #111; }
.filter { display: flex; align-items: center; height: 18px; margin: 0 2px; padding-left: 1px; border: 1px solid #c4c4c4; background: #fafafa; }
.filter input { flex: 1; }
.tree { list-style: none; margin: 0; padding: 0; display: grid; grid-template-rows: repeat(20, 1fr); height: 312px; border-bottom: 2px solid #2d79aa; }
.tree li { display: flex; align-items: center; gap: 2px; padding-left: 17px; position: relative; white-space: nowrap; }
.tree li svg { width: 13px; height: 13px; }
.tree .root { padding-left: 2px; font-family: "Noto Sans CJK JP", sans-serif; }
.tree .x::before { content: ""; position: absolute; left: 6px; border: 2px solid transparent; border-left: 3px solid #333; border-right: 0; }

.view { position: relative; flex: 1; min-width: 0; background: #fff; }
.scene { position: absolute; inset: 0; width: 100%; height: 100%; }
.axis { font-size: 7px; }
.bignum { font: 106px "Noto Sans CJK JP", sans-serif; fill: #000; }
.hud { position: relative; display: flex; align-items: center; justify-content: center; gap: 3px; padding: 4px 4px 0 0; }
.hud .dd { margin: 0 2px; border-top-color: #888; }
.handle { position: absolute; left: -1px; top: 272px; width: 7px; height: 28px; border: 1px solid #aaa; border-left: 0; background: #f6f6f6; display: flex; align-items: center; justify-content: center; }
.taskpane { position: absolute; right: 0; top: 20px; width: 18px; border: 1px solid #aaa; border-right: 0; background: #d8d8d8; }
.taskpane button { display: flex; align-items: center; justify-content: center; width: 100%; height: 17px; border-bottom: 1px solid #aaa; }
.taskpane button:last-child { border-bottom: 0; }
.taskpane .on { background: #fff; }

.bottom { display: flex; background: #f0f0f0; border-top: 1px solid #999; }
.nav { display: flex; width: 45px; padding-left: 2px; background: #aaa; color: #888; border-right: 1px solid #888; }
.nav button { flex: 1; display: flex; align-items: center; justify-content: center; border-right: 1px solid #999; }
.tab { display: flex; align-items: center; padding: 0 5px; background: #d4d4d4; border-right: 1px solid #888; line-height: 8px; }
.tab .k { line-height: 8px; }
.tab.on { background: #fff; padding: 0 6px; }
```
